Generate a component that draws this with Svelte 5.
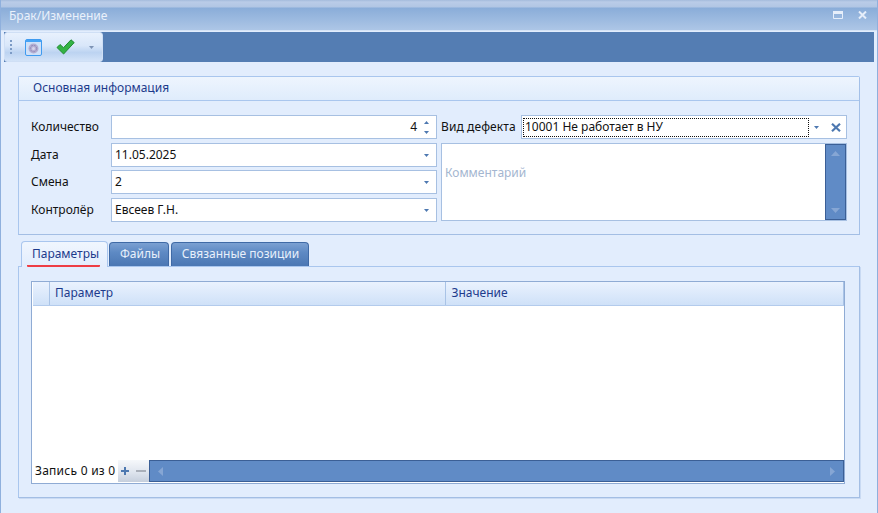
<script>
  const rows = [
    { label: 'Количество', value: '4', right: true, spin: true },
    { label: 'Дата', value: '11.05.2025' },
    { label: 'Смена', value: '2' },
    { label: 'Контролёр', value: 'Евсеев Г.Н.' }
  ];
</script>

{#snippet arrow()}
  <svg class="arrow" width="5" height="3" viewBox="0 0 5 3"><path d="M0 0h5L2.500 3z" fill="#4d78b0" /></svg>
{/snippet}

<div class="window">
  <header class="title">
    <span class="title-text">Брак/Изменение</span>
    <svg class="max" width="10" height="8" viewBox="0 0 10 8"><path d="M.5.5h9v7h-9z" fill="none" stroke="#e6eefa" /><path d="M0 0h10v3H0z" fill="#e6eefa" /></svg>
    <svg class="close" width="9" height="8" viewBox="0 0 9 8"><path d="M1 .5l7 7M8 .5l-7 7" stroke="#e6eefa" stroke-width="2" /></svg>
  </header>

  <div class="toolbar">
    <div class="tools">
      <div class="grip"><i></i><i></i><i></i><i></i></div>
      <svg class="ico-window" width="17" height="17" viewBox="0 0 17 17">
        <rect x="0.500" y="0.500" width="16" height="16" rx="1.500" fill="#cfe0f8" stroke="#3f9bf0" />
        <rect x="1" y="1" width="15" height="2" fill="#46a3f5" />
        <circle cx="8.500" cy="9.500" r="5" fill="#b4aed2" />
        <circle cx="8.500" cy="9.500" r="3.200" fill="none" stroke="#8f88b6" stroke-dasharray="2 1" />
        <circle cx="8.500" cy="9.500" r="1.500" fill="#d8d4ea" />
      </svg>
      <svg class="ico-check" width="19" height="16" viewBox="0 0 19 16">
        <path d="M1 8.500l3-3 3.500 3.200L15 .8l3.200 2.800L7.600 15z" fill="#33b345" stroke="#1f8a30" stroke-width="1" stroke-linejoin="round" />
      </svg>
      <svg class="ico-more" width="5" height="3" viewBox="0 0 5 3"><path d="M0 0h5L2.500 3z" fill="#7d93b5" /></svg>
    </div>
  </div>

  <section class="group">
    <div class="group-head">Основная информация</div>
    <div class="group-body">
      <div class="fields">
        {#each rows as r}
          <div class="row">
            <span class="label">{r.label}</span>
            <div class="input" class:right={r.right}>
              <span class="val">{r.value}</span>
              {#if r.spin}
                <span class="spin">
                  <svg width="5" height="3" viewBox="0 0 5 3"><path d="M0 3h5L2.500 0z" fill="#4d78b0" /></svg>
                  <svg width="5" height="3" viewBox="0 0 5 3"><path d="M0 0h5L2.500 3z" fill="#4d78b0" /></svg>
                </span>
              {:else}
                {@render arrow()}
              {/if}
            </div>
          </div>
        {/each}
      </div>
      <div class="side">
        <div class="defect">
          <span class="label-d">Вид дефекта</span>
          <div class="combo">
            <span class="focus">10001 Не работает в НУ</span>
            {@render arrow()}
            <svg class="clear" width="10" height="9" viewBox="0 0 10 9"><path d="M1 .8l8 7.400M9 .8l-8 7.400" stroke="#4d78b0" stroke-width="2.200" /></svg>
          </div>
        </div>
        <div class="comment">
          <span class="ph">Комментарий</span>
          <div class="vbar">
            <svg width="9" height="5" viewBox="0 0 9 5"><path d="M0 5h9L4.500 0z" fill="#86a6d4" /></svg>
            <svg width="9" height="5" viewBox="0 0 9 5"><path d="M0 0h9L4.500 5z" fill="#86a6d4" /></svg>
          </div>
        </div>
      </div>
    </div>
  </section>

  <div class="tabs">
    <div class="tab active"><span>Параметры</span></div>
    <div class="tab t2">Файлы</div>
    <div class="tab t3">Связанные позиции</div>
  </div>

  <section class="page">
    <div class="grid">
      <div class="ghead">
        <div class="gc g0"></div>
        <div class="gc g1">Параметр</div>
        <div class="gc g2">Значение</div>
      </div>
      <div class="gbody"></div>
      <div class="gfoot">
        <span class="rec">Запись 0 из 0</span>
        <div class="nav">
          <svg width="10" height="10" viewBox="0 0 10 10"><path d="M4 1h2v3h3v2H6v3H4V6H1V4h3z" fill="#4d78b0" /></svg>
          <svg width="10" height="10" viewBox="0 0 10 10"><path d="M0 4h10v2H0z" fill="#a9afb9" /></svg>
        </div>
        <div class="hbar">
          <svg width="5" height="9" viewBox="0 0 5 9"><path d="M5 0v9L0 4.500z" fill="#86a6d4" /></svg>
          <svg width="5" height="9" viewBox="0 0 5 9"><path d="M0 0v9l5-4.500z" fill="#86a6d4" /></svg>
        </div>
      </div>
    </div>
  </section>
</div>

<style>
  :global(body) { margin: 0; background: #e2edfd; }
  .window {
    width: 878px; height: 513px; box-sizing: border-box; overflow: hidden;
    background: #e2edfd; border-left: 1px solid #8fb0dd; border-right: 1px solid #8fb0dd;
    font: 12px "Noto Sans", "Liberation Sans", sans-serif; color: #111;
    display: flex; flex-direction: column;
  }
  .title {
    height: 31px; margin: 0 -1px; box-sizing: border-box; flex: none;
    display: flex; align-items: center; padding: 0 11px 0 9px;
    border-bottom: 1px solid #d5e3f6;
    background: linear-gradient(#a4bbdc 0, #bacce8 2px, #b1c6e4 7px, #8aadd9 8px, #adc6e6 30px);
  }
  .title-text { color: #eaf1fb; flex: 1; }
  .close { margin-left: 15px; }
  .toolbar { height: 30px; margin: 1px 3px 0; background: #547db3; flex: none; }
  .tools {
    width: 99px; height: 30px; box-sizing: border-box; position: relative;
    display: flex; align-items: center; padding-left: 5px;
    border-radius: 3px; border: 1px solid #cfdff5;
    background: linear-gradient(#e8f1fd, #d9e7fa 45%, #bcd3f1 70%, #d3e3f8);
  }
  .grip { display: flex; flex-direction: column; gap: 2px; width: 15px; }
  .grip i { width: 2px; height: 2px; background: #7c9bc6; display: block; }
  .ico-check { margin-left: 14px; }
  .ico-more { margin-left: 14px; }
  .group {
    margin: 14px 17px 0; height: 159px; box-sizing: border-box; flex: none;
    border: 1px solid #a9c6ee; border-radius: 2px 2px 0 0;
    border-right-color: #a3c0e8; border-bottom-color: #a3bee4;
    display: flex; flex-direction: column;
  }
  .group-head {
    height: 24px; box-sizing: border-box; padding: 2px 0 0 14px; flex: none;
    color: #1d3b8c; border-bottom: 1px solid #a9c6ee; line-height: 18px;
    background: linear-gradient(#eef5fe, #dfecfc);
  }
  .group-body { display: flex; padding: 14px 12px 0 12px; gap: 4px; }
  .fields {
    width: 406px; flex: none; display: grid;
    grid-template-rows: 28px 27px 28px 24px;
  }
  .row { display: flex; align-items: flex-start; }
  .label { width: 80px; flex: none; line-height: 23px; }
  .input {
    flex: 1; height: 24px; box-sizing: border-box; background: #fff;
    border: 1px solid #a7c0e2; display: flex; align-items: center; padding: 0 7px 0 3px;
  }
  .val { flex: 1; line-height: 22px; }
  .right .val { text-align: right; padding-right: 7px; }
  .spin { display: flex; flex-direction: column; gap: 7px; }
  .spin svg { display: block; }
  .arrow { flex: none; }
  .side { flex: 1; display: flex; flex-direction: column; gap: 4px; }
  .defect { display: flex; height: 24px; }
  .label-d { width: 80px; flex: none; line-height: 23px; letter-spacing: .1px; }
  .combo {
    flex: 1; box-sizing: border-box; height: 24px; background: #fff; border: 1px solid #a7c0e2;
    display: flex; align-items: center; padding-right: 5px;
  }
  .focus {
    width: 286px; height: 19px; margin-left: 1px; box-sizing: border-box; outline: 1px dotted #111; outline-offset: -1px;
    line-height: 18px; padding-left: 2px; color: #111;
  }
  .combo .arrow { margin-left: 5px; }
  .clear { margin-left: 12px; }
  .comment {
    height: 78px; box-sizing: border-box; background: #fff; border: 1px solid #a7c0e2;
    display: flex; align-items: stretch;
  }
  .ph { flex: 1; color: #a4b6d0; padding: 20px 0 0 3px; }
  .vbar {
    width: 21px; box-sizing: border-box; border: 1px solid #3b5f96; background: #608bc6;
    display: flex; flex-direction: column; justify-content: space-between; align-items: center; padding: 6px 0;
  }
  .tabs { display: flex; margin: 6px 0 0 20px; height: 25px; align-items: flex-end; flex: none; gap: 2px; }
  .tab {
    box-sizing: border-box; height: 24px; line-height: 22px; text-align: center; color: #e8f0fb;
    border: 1px solid #3f6aa6; border-bottom: 0; border-radius: 4px 4px 0 0;
    background: linear-gradient(#7ba0d2, #5e8ac4 40%, #4b77b3);
  }
  .active {
    width: 87px; height: 26px; margin-bottom: -1px; position: relative; z-index: 1; color: #1d3b8c;
    border: 1px solid #a9c6ee; border-bottom: 0; background: linear-gradient(#f0f6fe, #e2edfd);
    margin-right: -1px; line-height: 24px;
  }
  .active span { display: block; margin: 0 7px 0 5px; height: 23px; padding-left: 4px; border-bottom: 2px solid #ee3d44; border-radius: 1px; }
  .t2 { width: 60px; padding-left: 2px; }
  .t3 { width: 138px; padding-left: 1px; }
  .page {
    margin: 0 17px; height: 232px; box-sizing: border-box; flex: none;
    border: 1px solid #a9c6ee; border-right-color: #a3bee4; border-bottom-color: #a3bee4;
    box-shadow: 1px 1px 0 #c9daf3; padding: 14px 14px 0 12px;
  }
  .grid {
    height: 203px; box-sizing: border-box; background: #fff; border: 1px solid #8fabd4;
    display: flex; flex-direction: column;
  }
  .ghead {
    height: 24px; flex: none; box-sizing: border-box; display: flex; margin: 0 0 0 1px;
    background: linear-gradient(#eaf2fe, #cfe1f8); border-bottom: 1px solid #b3cbec;
  }
  .gc { box-sizing: border-box; border-right: 1px solid #a9c3e6; color: #1d3b8c; line-height: 22px; padding-left: 5px; }
  .g0 { width: 17px; }
  .g1 { width: 397px; }
  .g2 { width: 398px; }
  .gbody { flex: 1; }
  .gfoot { height: 23px; flex: none; display: flex; align-items: stretch; padding-bottom: 1px; box-sizing: border-box; }
  .rec { width: 86px; padding-left: 3px; box-sizing: border-box; line-height: 22px; letter-spacing: .25px; white-space: nowrap; }
  .nav {
    width: 31px; box-sizing: border-box; display: flex; align-items: center; gap: 6px; padding-left: 2px;
    background: linear-gradient(#f6f8fb, #dfe5ee 55%, #c6cfdd);
  }
  .hbar {
    width: 695px; box-sizing: border-box; border: 1px solid #3b5f96; background: #608bc6;
    display: flex; justify-content: space-between; align-items: center; padding: 0 8px;
  }
</style>
